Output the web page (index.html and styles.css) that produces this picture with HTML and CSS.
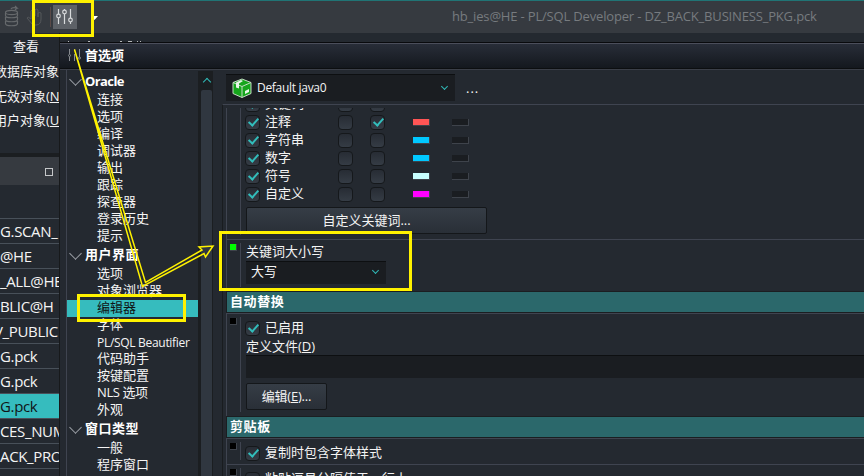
FILE: index.html
```html
<!DOCTYPE html>
<html lang="zh-CN">
<head>
<meta charset="utf-8">
<title>PL/SQL Developer</title>
<link rel="stylesheet" href="styles.css">
</head>
<body>
<div class="app">
  <header class="titlebar">
    <svg class="tools" width="100" height="32" viewBox="0 0 100 32" fill="none">
      <g stroke="#66696c" stroke-width="1.2"><ellipse cx="11.5" cy="11.500" rx="6" ry="2.2"/><path d="M5.500 12v2.500c0 3 12 3 12 0v-3M5.500 16v2.500c0 3 12 3 12 0v-2.500M5.500 20v2.500c0 3 12 3 12 0v-2.500M11 8q1-2 6-1l-2-2M17 7l-2 2"/></g>
      <path d="M33 24l-6-7q1-2 4 1v-8q1-2 2 0v5v-7q1-2 2 0v7v-6q1-2 3 0v7v-4q2-1 3 0v6q0 6-5 6z" stroke="#55585b"/>
      <path d="M50.500 6v20" stroke="#5a4a48"/>
      <rect x="53" y="4" width="24" height="24" fill="#5d6167"/>
      <g stroke="#d8dadc" stroke-width="1.200"><path d="M58.500 8v5M58.500 17v6M64.500 8v1M64.500 13v10M70.500 8v9M70.500 21v2"/><circle cx="58.500" cy="15" r="1.800"/><circle cx="64.500" cy="11" r="1.800"/><circle cx="70.500" cy="19" r="1.800"/></g>
      <path d="M91 15h7l-3.500 4z" fill="#fff"/>
    </svg>
    <span class="wintitle">hb_ies@HE - PL/SQL Developer - DZ_BACK_BUSINESS_PKG.pck</span>
  </header>
  <div class="body">
    <aside class="browser">
      <div class="menu">查看</div>
      <div class="types"><p>数据库对象</p><p>无效对象(<u>N</u></p><p>用户对象(<u>U</u></p></div>
      <div class="panelhead"><i></i></div>
      <ul class="files">
        <li>G.SCAN_</li><li>@HE</li><li>_ALL@HE</li><li>BLIC@H</li><li class="shift">V_PUBLIC</li><li>G.pck</li><li>G.pck</li><li class="on">G.pck</li><li>CES_NUM</li><li>ACK_PRO</li><li></li>
      </ul>
    </aside>
    <section class="dialog">
      <div class="dlgtitle">
        <svg width="14" height="14" viewBox="0 0 14 14" fill="none" stroke="#888c91"><path d="M1.500 1v5M1.500 9v4M6.500 1v2M6.500 6v7M11.500 1v8"/><circle cx="1.500" cy="7.500" r="1"/><circle cx="11.500" cy="10" r="1"/></svg>
        <b>首选项</b>
      </div>
      <div class="dlgbody">
        <nav class="tree">
          <div class="list">
            <h3 class="latin">Oracle</h3>
            <p>连接</p><p>选项</p><p>编译</p><p>调试器</p><p>输出</p><p>跟踪</p><p>探查器</p><p>登录历史</p><p>提示</p>
            <h3>用户界面</h3>
            <p>选项</p><p>对象浏览器</p><p class="on">编辑器</p><p>字体</p><p class="lat">PL/SQL Beautifier</p><p>代码助手</p><p>按键配置</p><p class="nls">NLS 选项</p><p>外观</p>
            <h3>窗口类型</h3>
            <p>一般</p><p>程序窗口</p>
          </div>
          <div class="scroll"><i></i></div>
        </nav>
        <main class="pane">
          <div class="profile">
            <div class="combo big">
              <svg width="20" height="20" viewBox="0 0 20 20"><path d="M10 1l9 3.500v11l-9 4-9-4v-11z" fill="#16a51c" stroke="#c4dcc4"/><path d="M1 4.500l9 4 9-4M10 8.500v11" stroke="#c4dcc4" fill="none"/><path d="M4 4.500l5-2.500 2 1-4 2.500v5l-3-1z" fill="#e8f5e8"/><path d="M13 13l4-2v3l-4 2z" fill="#e8f5e8"/></svg>
              <span>Default java0</span><em class="arrow"></em>
            </div>
            <span class="more">...</span>
          </div>
          <div class="options">
            <div class="group styles">
              <div class="inner">
                <div class="row"><i class="cb on"></i><span>关键词</span><i class="cb"></i><i class="cb"></i></div>
                <div class="row"><i class="cb on"></i><span>注释</span><i class="cb"></i><i class="cb on"></i><i class="sw red"></i><i class="sw"></i></div>
                <div class="row"><i class="cb on"></i><span>字符串</span><i class="cb"></i><i class="cb"></i><i class="sw blue"></i><i class="sw"></i></div>
                <div class="row"><i class="cb on"></i><span>数字</span><i class="cb"></i><i class="cb"></i><i class="sw blue"></i><i class="sw"></i></div>
                <div class="row"><i class="cb on"></i><span>符号</span><i class="cb"></i><i class="cb"></i><i class="sw pale"></i><i class="sw"></i></div>
                <div class="row"><i class="cb on"></i><span>自定义</span><i class="cb"></i><i class="cb"></i><i class="sw pink"></i><i class="sw"></i></div>
                <div class="btn wide">自定义关键词...</div>
              </div>
            </div>
            <div class="group case">
              <i class="mark green"></i>
              <div class="inner"><div class="label">关键词大小写</div><div class="combo small"><span>大写</span><em class="arrow"></em></div></div>
            </div>
            <h2>自动替换</h2>
            <div class="group replace">
              <i class="mark"></i>
              <div class="inner">
                <div class="row"><i class="cb on"></i><span>已启用</span></div>
                <div class="label">定义文件(<u>D</u>)</div>
                <div class="field"></div>
                <div class="btn">编辑(<u>E</u>)...</div>
              </div>
            </div>
            <h2>剪贴板</h2>
            <div class="group clip"><i class="mark"></i><div class="inner"><div class="row"><i class="cb on"></i><span>复制时包含字体样式</span></div></div></div>
            <div class="group clip"><i class="mark"></i><div class="inner"><div class="row"><i class="cb"></i><span>粘贴逗号分隔值于一行上</span></div></div></div>
          </div>
        </main>
      </div>
    </section>
  </div>
  <svg class="notes" width="864" height="476" viewBox="0 0 864 476" fill="none" stroke="#fff200">
    <g stroke-width="3"><rect x="33.500" y="1.500" width="59" height="34"/><rect x="78.500" y="295.500" width="106" height="25"/><rect x="220.500" y="232.500" width="190" height="57"/></g>
    <path d="M74.500 49.500L142.500 286.500L204 253.500L205.500 257L213 246L199 247L202 250L145.500 282.500Z" stroke-width="1.500"/>
    <path d="M68 41.500h1M88 41.500h2M120 41.500h2M128 41.500h4M137 41.500h1M140 41.500h1" stroke="#b5b7b9"/>
  </svg>
</div>
</body>
</html>
```

FILE: styles.css
```css
*{box-sizing:border-box}
body,p,h2,h3,ul{margin:0;padding:0}
body{background:#242930;color:#f4f4f4;font:13px/17px "Open Sans","Noto Sans CJK SC",sans-serif;overflow:hidden}
i,em{font-style:normal;display:block;flex:none}
u{text-underline-offset:1px}
.app{position:relative;width:864px;height:476px;overflow:hidden;display:flex;flex-direction:column}
.notes{position:absolute;left:0;top:0}
.titlebar{height:33px;flex:none;background:#363a40;border-top:1px solid #207475;display:flex}
.tools{flex:none}
.wintitle{margin-left:352px;line-height:31px;font-size:13px;letter-spacing:-.17px;color:#777b7f;white-space:nowrap}
.body{flex:1;display:flex;min-height:0}
.browser{width:60px;flex:none;overflow:hidden;border-right:1px solid #17191b;white-space:nowrap}
.menu{height:29px;padding:5px 0 0 13px}
.types{height:91px;margin-left:-6px;padding-top:1px}
.types p{height:24.5px;line-height:17px}
.panelhead{height:32px;background:#363a40;border-top:4px solid #1b1e21;display:flex;justify-content:flex-end;padding:11px 6px 0}
.panelhead i{width:8px;height:8px;border:1px solid #c5c7c9}
.files{list-style:none;margin-top:33px;font-size:15px;letter-spacing:-.35px}
.files li{height:25px;border-top:1px solid #485059;line-height:24px}
.files .shift{text-indent:-6px}
.files .on{background:#36bcbe;color:#101416}
.dialog{flex:1;margin-top:9px;border-top:1px solid #090a0d;display:flex;flex-direction:column;min-width:0}
.dlgtitle{height:26px;flex:none;background:linear-gradient(#282d38,#14181e);border-top:1px solid #4b4e5b;border-bottom:1px solid #0c0e10;display:flex;align-items:center;padding:0 0 2px 8px;gap:3px;color:#fff}
.dlgbody{flex:1;display:flex;min-height:0;border-top:1px solid #3b3f48;overflow:hidden}
.tree{width:155px;flex:none;margin-left:6px;padding-top:1px;border-left:1px solid #3f4450;display:flex}
.list{width:131px;flex:none}
.list p{height:17px;line-height:15px;padding-left:30px;white-space:nowrap}
.list .lat{font-size:12px;line-height:17px;letter-spacing:-.3px}
.list .nls{letter-spacing:-.4px}
.list .on{background:#36bcbe;color:#101416}
.list h3{height:21px;font-size:13px;line-height:19px;letter-spacing:.5px;color:#fff;display:flex}
.list .latin{letter-spacing:-.6px;line-height:21px}
.list h3::before{content:"";width:8px;height:8px;margin:4px 5px 0 4px;border:solid #9ca0a6;border-width:0 1px 1px 0;transform:rotate(45deg)}
.scroll{width:15px;background:#1b1e21;padding:19px 1px 0 3px;position:relative}
.scroll i{height:400px;background:#303740;border-radius:2px}
.scroll::before{content:"";position:absolute;left:6px;top:8px;width:5px;height:5px;border:solid #30b9b7;border-width:1.5px 0 0 1.5px;transform:rotate(45deg)}
.pane{flex:1;min-width:0;display:flex;flex-direction:column}
.profile{height:34px;flex:none;display:flex;padding:4px 0 0 5px}
.combo{background:#1a1d21;border-top:1px solid #0d0f11;display:flex;align-items:center}
.big{width:229px;height:27px;padding:0 8px 1px 6px;font-size:12px;letter-spacing:-.3px;gap:5px}
.arrow{width:5px;height:5px;margin:-3px 0 0 auto;border:solid #30b9b7;border-width:0 1.8px 1.8px 0;transform:rotate(45deg)}
.more{margin:6px 0 0 11px;letter-spacing:1px}
.options{flex:1;border-top:1px solid #3f4450;border-left:1px solid #191c1f;margin-left:1px;padding-left:3px;overflow:hidden;display:flex;flex-direction:column}
.group{flex:none;border:solid #3f4450;border-width:1px 0 0 1px;display:flex;position:relative}
.inner{margin-left:13px;border-left:1px solid #3f4450;padding-left:5px;flex:1;white-space:nowrap}
.styles{border-top:0;height:131px;margin-top:3px;overflow:hidden}
.styles .inner{margin-bottom:4px}
.row{display:flex;height:18px;align-items:center;margin-left:-1px}
.styles .row:first-child{margin-top:-14px}
.row span{width:78px;padding-left:5px;line-height:17px}
.cb{width:15px;height:15px;border:1px solid #15181b;border-radius:4px;background:linear-gradient(#272c34,#353c45);position:relative;top:1px}
.cb + .cb{margin-left:17px}
.cb.on::after{content:"";display:block;width:4px;height:8px;margin:1px 0 0 5px;border:solid #32bdbb;border-width:0 2px 2px 0;transform:translate(-.5px,-1px) rotate(42deg)}
.sw{width:17px;height:7px;margin:2px 0 0 22px;background:#1a1d21;border:solid #3e434b;border-width:0 1px 1px 0}
.cb + .sw{margin-left:28px}
.red{background:#ff5555}
.blue{background:#00c8ff}
.pale{background:#c8ffff}
.pink{background:#f0f}
.btn{width:81px;height:27px;border:1px solid #14171a;border-radius:2px;background:linear-gradient(#363d46,#292f37);line-height:25px;text-align:center}
.wide{width:241px;margin-top:5px}
.case{height:52px}
.case .inner,.replace .inner{margin-top:3px;margin-bottom:4px}
.mark{position:absolute;left:3px;top:4px;width:7px;height:7px;background:#000;border:solid #3e434b;border-width:0 1px 1px 0}
.green{background:#0f0}
.case .label{height:18px}
.small{width:140px;height:23px;padding:0 8px 3px 5px}
h2{height:22px;flex:none;background:#2b686b;border:solid #1b1e21;border-width:1px 0 1px 1px;font-size:13px;line-height:18px;letter-spacing:.6px;padding-left:3px;color:#fff}
.replace{height:103px}
.replace .row{height:20px}
.replace .label{height:18px;line-height:18px}
.replace .btn{width:81px;letter-spacing:-.2px;margin-top:5px}
.field{height:23px;background:#1a1d21;border-top:1px solid #0d0f11}
.clip{height:26px}
.clip .inner{margin-top:3px;margin-bottom:4px}
.clip .row{height:20px}
.clip .row span{width:auto}
```
